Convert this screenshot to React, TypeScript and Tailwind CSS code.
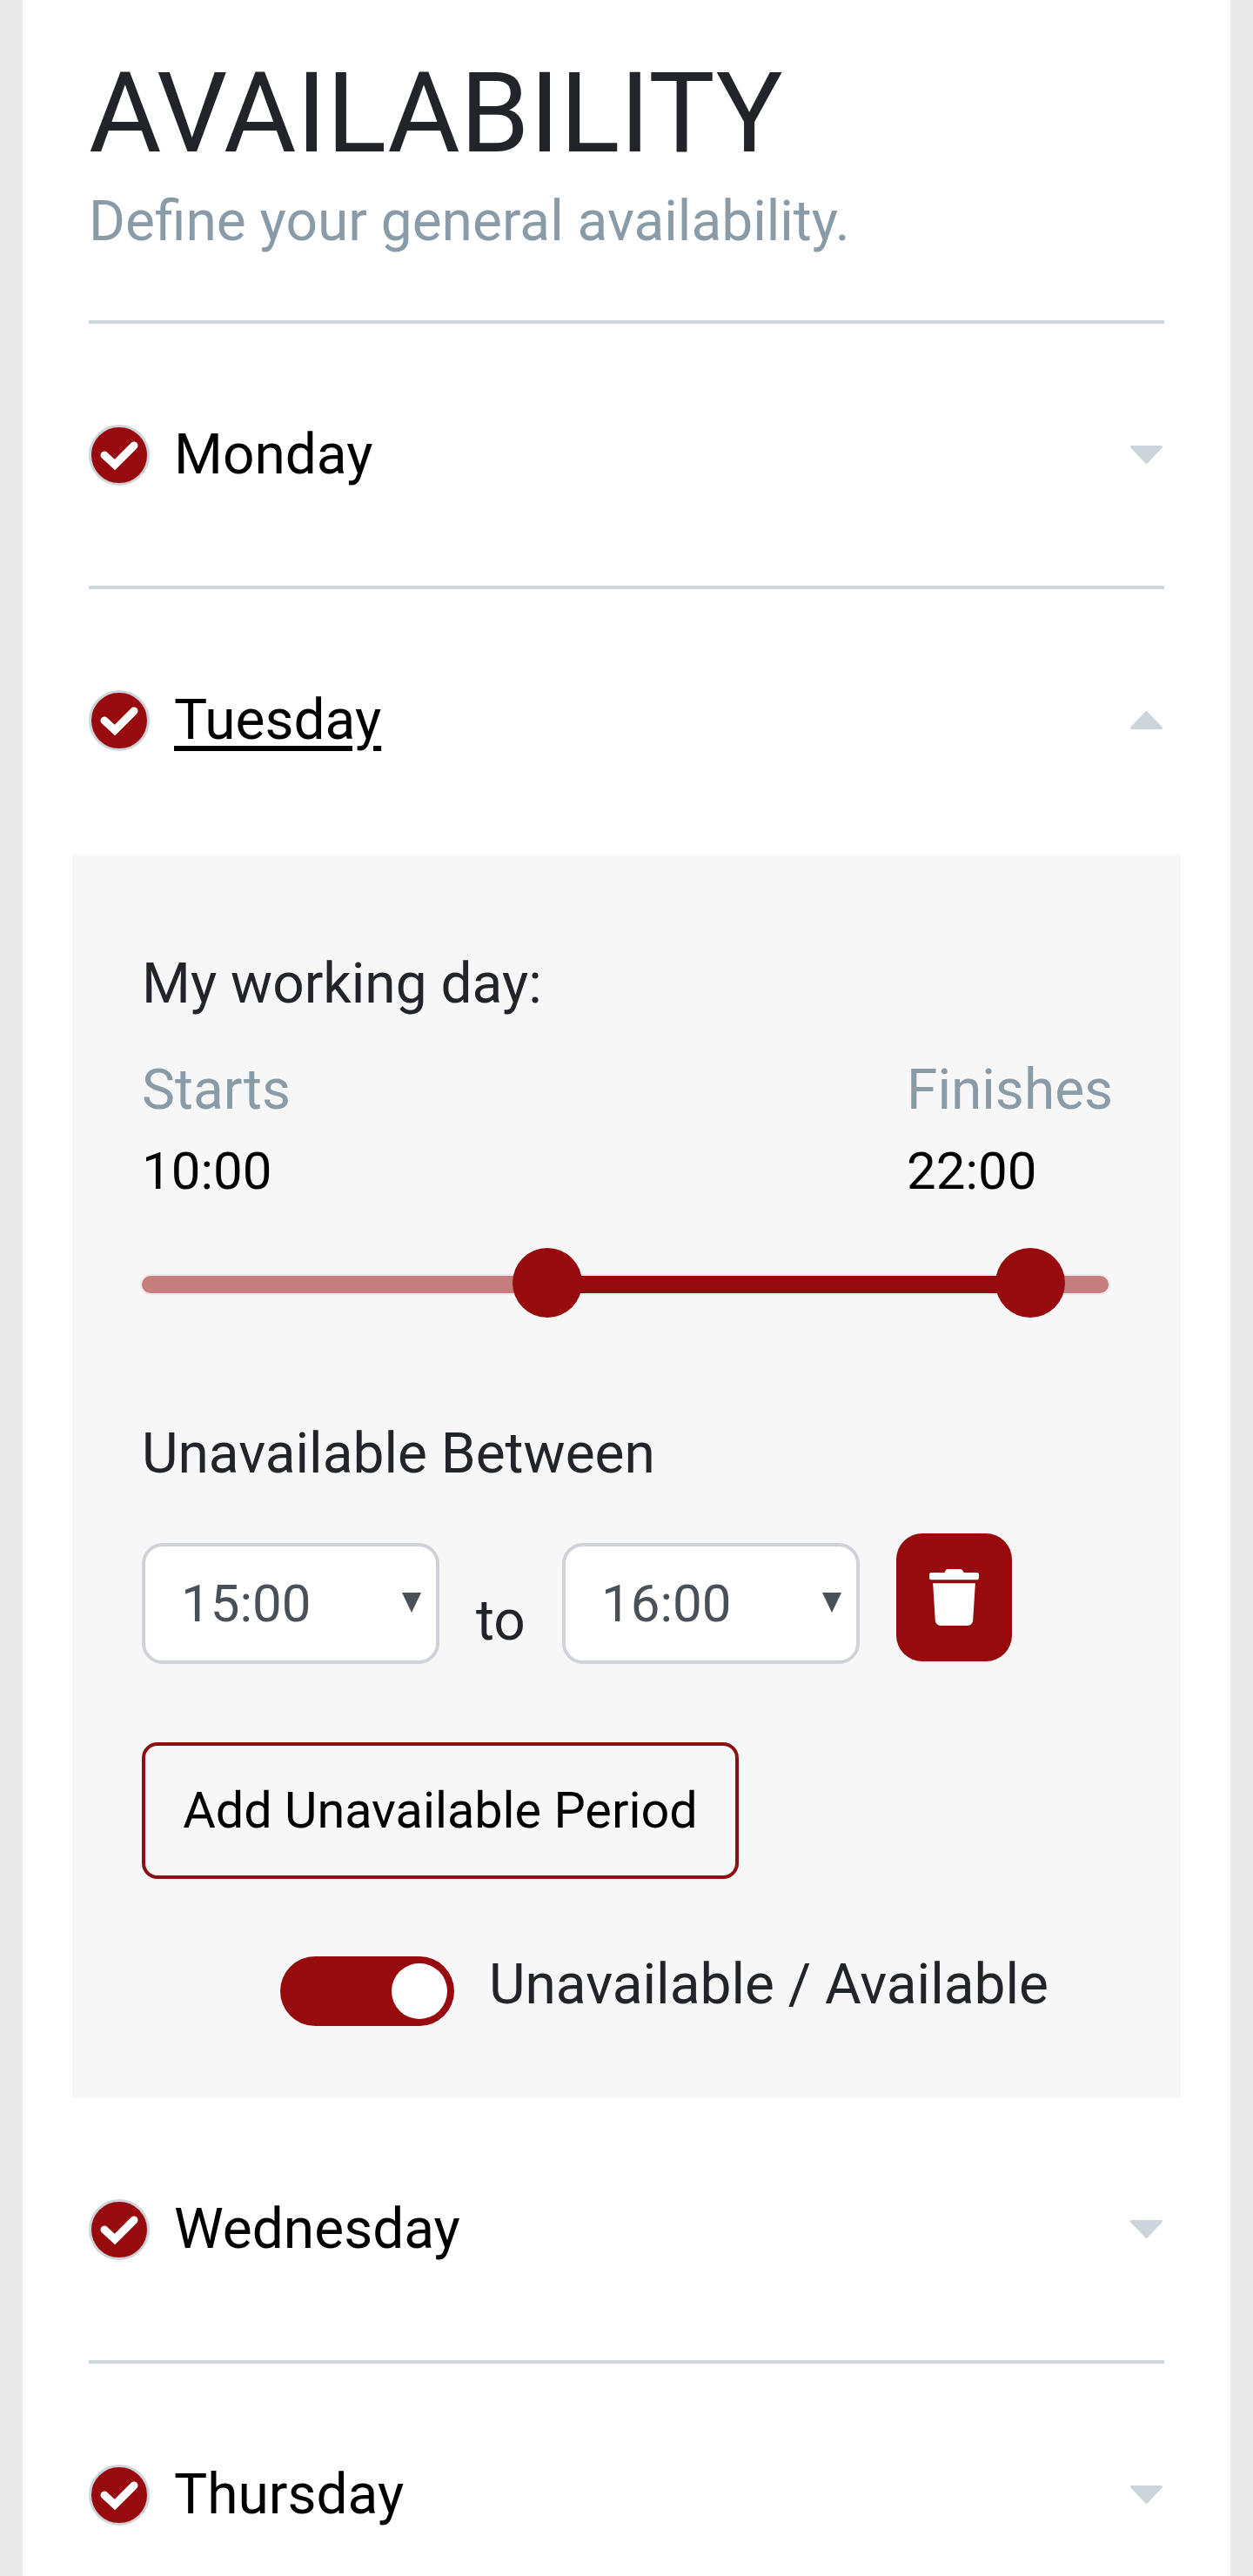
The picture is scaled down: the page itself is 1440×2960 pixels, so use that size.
import React from "react";
import { FaTrash } from "react-icons/fa";

const roboto = "font-['Roboto',sans-serif]";

function CheckBadge() {
  return (
    <span className="flex h-[70px] w-[70px] shrink-0 items-center justify-center rounded-full border-[3px] border-[#ced4da] bg-[#970a0d]">
      <svg width="64" height="64" viewBox="0 0 64 64" fill="none" aria-hidden="true">
        <path d="M15 32 L27 43 L49 21" stroke="#ffffff" strokeWidth="9" strokeLinecap="round" />
      </svg>
    </span>
  );
}

function Caret({ up }: { up?: boolean }) {
  return (
    <svg width="37" height="21" viewBox="0 0 37 21" className="mr-[2px] shrink-0" aria-hidden="true">
      <polygon
        points={up ? "18.5,1.5 35.5,19.5 1.5,19.5" : "1.5,1.5 35.5,1.5 18.5,19.5"}
        fill="#ccd4dc"
        stroke="#ccd4dc"
        strokeWidth="3"
        strokeLinejoin="round"
      />
    </svg>
  );
}

function DayRow({ name, open }: { name: string; open?: boolean }) {
  return (
    <div className="flex h-[301px] items-center justify-between">
      <div className="flex items-center gap-[28px]">
        <CheckBadge />
        <span
          className={`text-[64px] leading-[76px] text-black ${
            open ? "underline decoration-[6px] underline-offset-[8px]" : ""
          }`}
        >
          {name}
        </span>
      </div>
      <Caret up={open} />
    </div>
  );
}

function Divider() {
  return <div className="h-[4px] bg-[#cfd6dd]" />;
}

function TimeSelect({ value }: { value: string }) {
  return (
    <div className="relative mt-[11px] h-[139px] w-[342px] shrink-0">
      <select
        defaultValue={value}
        className="h-full w-full appearance-none rounded-[24px] border-[4px] border-[#cfd2d8] bg-white pl-[41px] text-[60px] text-[#495057] outline-none"
      >
        <option>{value}</option>
      </select>
      <svg
        width="22"
        height="23"
        viewBox="0 0 22 23"
        className="pointer-events-none absolute left-[299px] top-[57px]"
        aria-hidden="true"
      >
        <polygon points="0,0 22,0 11,23" fill="#495057" />
      </svg>
    </div>
  );
}

function RangeSlider() {
  return (
    <div className="relative mt-[50px] h-[80px]">
      <div className="h-[32px]" />
      <div className="h-[20px] rounded-full bg-[#c67d7e] ring-2 ring-[#efe9e9]" />
      <div className="absolute left-[466px] top-[32px] h-[20px] w-[555px] bg-[#970a0d]" />
      <div className="absolute left-[426px] top-0 h-[80px] w-[80px] rounded-full bg-[#970a0d]" />
      <div className="absolute left-[981px] top-0 h-[80px] w-[80px] rounded-full bg-[#970a0d]" />
    </div>
  );
}

function TuesdayPanel() {
  return (
    <div className="-mx-[19px] bg-[#f7f7f7] pb-[83px] pl-[80px] pr-[83px] pt-[111px] text-[64px] leading-[76px] text-[#212529]">
      <p>My working day:</p>
      <div className="mt-[46px] flex justify-between">
        <div>
          <p className="text-[#8a9ba8]">Starts</p>
          <p className="mt-[17px] text-[60px] text-black">10:00</p>
        </div>
        <div className="w-[232px]">
          <p className="text-[#8a9ba8]">Finishes</p>
          <p className="mt-[17px] text-[60px] text-black">22:00</p>
        </div>
      </div>
      <RangeSlider />
      <p className="mt-[119px]">Unavailable Between</p>
      <div className="mt-[53px] flex items-start">
        <TimeSelect value="15:00" />
        <span className="ml-[42px] mt-[63px] w-[99px]">to</span>
        <TimeSelect value="16:00" />
        <button className="ml-[42px] flex h-[147px] w-[133px] items-center justify-center rounded-[30px] bg-[#970a0d]">
          <FaTrash className="h-[65px] w-[57px] text-white" />
        </button>
      </div>
      <button className="mt-[90px] flex h-[157px] w-[686px] items-center justify-center rounded-[18px] border-[4px] border-[#8b1014] text-[57.6px] leading-[64px] text-black">
        Add Unavailable Period
      </button>
      <div className="mt-[89px] flex h-[80px] items-center gap-[40px] pl-[159px]">
        <div className="flex h-[80px] w-[200px] items-center justify-end rounded-full bg-[#970a0d] pr-[8px]">
          <div className="h-[64px] w-[64px] rounded-full bg-white" />
        </div>
        <span className="mb-[14px]">Unavailable / Available</span>
      </div>
    </div>
  );
}

export default function App() {
  return (
    <div className={`h-[2960px] overflow-hidden bg-[#e9e9e9] px-[26px] ${roboto}`}>
      <div className="h-full bg-white px-[76px] pt-[55px]">
        <h1 className="text-[128px] font-normal leading-[150px] text-[#212529]">AVAILABILITY</h1>
        <p className="mb-[75px] mt-[12px] text-[64px] leading-[76px] text-[#8a9ba8]">
          Define your general availability.
        </p>
        <Divider />
        <DayRow name="Monday" />
        <Divider />
        <div className="pb-[4px]">
          <DayRow name="Tuesday" open />
        </div>
        <TuesdayPanel />
        <DayRow name="Wednesday" />
        <Divider />
        <DayRow name="Thursday" />
      </div>
    </div>
  );
}
